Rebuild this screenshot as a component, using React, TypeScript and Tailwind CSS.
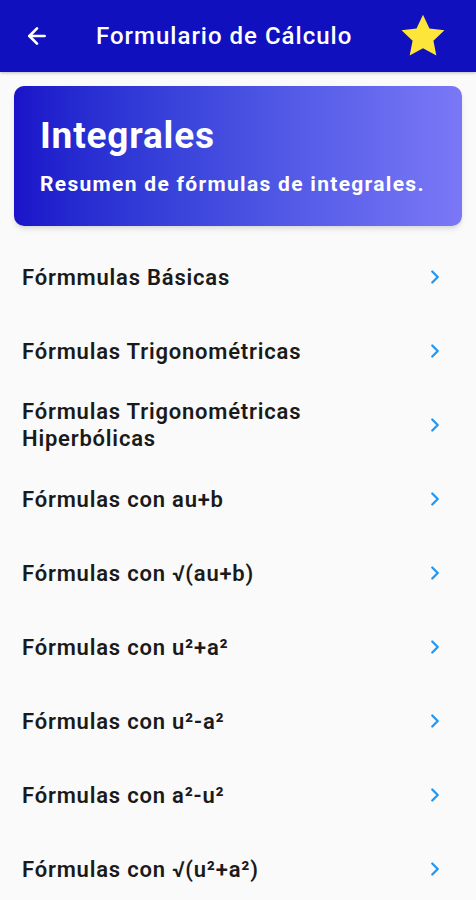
import { ArrowLeft, ChevronRight } from "lucide-react";

const ITEMS = [
  "Fórmmulas Básicas",
  "Fórmulas Trigonométricas",
  "Fórmulas Trigonométricas Hiperbólicas",
  "Fórmulas con au+b",
  "Fórmulas con √(au+b)",
  "Fórmulas con u²+a²",
  "Fórmulas con u²-a²",
  "Fórmulas con a²-u²",
  "Fórmulas con √(u²+a²)",
];

export default function App() {
  return (
    <div className="h-[900px] w-[476px] overflow-hidden bg-[#fafafa] font-['Roboto',sans-serif]">
      {/* Top bar */}
      <div className="flex h-[72px] items-center bg-[#1010bf] px-[24px] shadow-[0_1px_3px_rgba(0,0,0,0.25)]">
        <ArrowLeft className="h-[26px] w-[26px] text-white" strokeWidth={2.5} />
        <h1 className="ml-[46px] flex-1 text-[24px] font-medium tracking-[1px] text-white">Formulario de Cálculo</h1>
        <svg viewBox="0 0 24 24" className="mr-[4px] h-[50px] w-[50px]">
          <path
            d="M12 1.8l3.1 6.6 7.2.9-5.3 5 1.4 7.1L12 17.9l-6.4 3.5 1.4-7.1-5.3-5 7.2-.9z"
            fill="#fde53a"
          />
        </svg>
      </div>

      {/* Header card */}
      <div className="mx-[14px] mt-[14px] flex h-[140px] flex-col justify-center rounded-[10px] bg-gradient-to-r from-[#1b12c9] to-[#7b78f7] px-[26px] shadow-md">
        <h2 className="text-[37px] font-bold leading-[44px] tracking-[0.8px] text-white">Integrales</h2>
        <p className="mt-[12px] text-[21px] font-bold leading-[28px] tracking-[1.3px] text-white">Resumen de fórmulas de integrales.</p>
      </div>

      {/* List */}
      <div className="mt-[14px] flex flex-col">
        {ITEMS.map((item, i) => (
          <div key={i} className="flex h-[74px] items-center pl-[22px] pr-[30px]">
            <span className="w-[300px] flex-1 text-[22px] font-semibold leading-[27px] tracking-[0.8px] text-[#1a1a1a]">{item}</span>
            <ChevronRight className="h-[22px] w-[22px] text-[#2196f3]" strokeWidth={2.5} />
          </div>
        ))}
      </div>
    </div>
  );
}
